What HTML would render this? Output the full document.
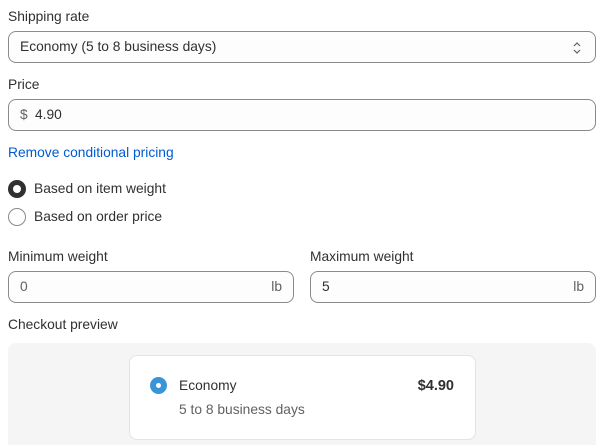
<!DOCTYPE html>
<html><head><style>
html,body{margin:0;width:603px;height:445px;overflow:hidden}
body{background:#fff;font-family:"Liberation Sans",Arial,sans-serif;font-size:13.8px;color:#303030;position:relative}
.a{position:absolute}
.lbl{line-height:16px}
.box{position:absolute;border:1px solid #8a8a8a;border-radius:8px;background:#fdfdfd;box-sizing:border-box}
.txt{position:absolute;line-height:16px}
</style></head><body>
<div class="a lbl" style="left:8px;top:9px">Shipping rate</div>
<div class="box" style="left:8px;top:31px;width:588px;height:32px">
 <div class="txt" style="left:11px;top:7px">Economy (5 to 8 business days)</div>
 <svg class="a" style="left:563px;top:9px" width="10" height="14" viewBox="0 0 10 14"><path d="M2 5l3-3 3 3M2 9l3 3 3-3" fill="none" stroke="#616161" stroke-width="1.2"/></svg>
</div>
<div class="a lbl" style="left:8px;top:77px">Price</div>
<div class="box" style="left:8px;top:99px;width:588px;height:32px">
 <div class="txt" style="left:11px;top:7px;color:#616161">$</div>
 <div class="txt" style="left:26px;top:7px">4.90</div>
</div>
<div class="a lbl" style="left:8px;top:145px;color:#005bd3">Remove conditional pricing</div>
<div class="a" style="left:8px;top:180px;width:18px;height:18px;border-radius:50%;background:#303030"></div>
<div class="a" style="left:13px;top:185px;width:8px;height:8px;border-radius:50%;background:#fff"></div>
<div class="a lbl" style="left:34px;top:181px">Based on item weight</div>
<div class="a" style="left:8px;top:208px;width:18px;height:18px;border-radius:50%;border:1px solid #8a8a8a;box-sizing:border-box"></div>
<div class="a lbl" style="left:34px;top:209px">Based on order price</div>
<div class="a lbl" style="left:8px;top:249px">Minimum weight</div>
<div class="a lbl" style="left:310px;top:249px">Maximum weight</div>
<div class="box" style="left:8px;top:271px;width:286px;height:32px">
 <div class="txt" style="left:11px;top:7px;color:#616161">0</div>
 <div class="txt" style="right:11px;top:7px;color:#616161">lb</div>
</div>
<div class="box" style="left:310px;top:271px;width:286px;height:32px">
 <div class="txt" style="left:11px;top:7px">5</div>
 <div class="txt" style="right:11px;top:7px;color:#616161">lb</div>
</div>
<div class="a lbl" style="left:8px;top:317px">Checkout preview</div>
<div class="a" style="left:8px;top:343px;width:588px;height:102px;background:#f5f5f5;border-radius:8px 8px 0 0"></div>
<div class="a" style="left:129px;top:355px;width:347px;height:85px;background:#fff;border:1px solid #e3e3e3;border-radius:8px;box-sizing:border-box"></div>
<div class="a" style="left:150px;top:377px;width:17px;height:17px;border-radius:50%;background:#3a95d8"></div>
<div class="a" style="left:156px;top:383px;width:5px;height:5px;border-radius:50%;background:#fff"></div>
<div class="a lbl" style="left:179px;top:378px">Economy</div>
<div class="a lbl" style="left:390px;top:378px;width:64px;text-align:right;font-weight:bold;font-size:14.5px">$4.90</div>
<div class="a lbl" style="left:179px;top:402px;color:#616161">5 to 8 business days</div>
</body></html>
